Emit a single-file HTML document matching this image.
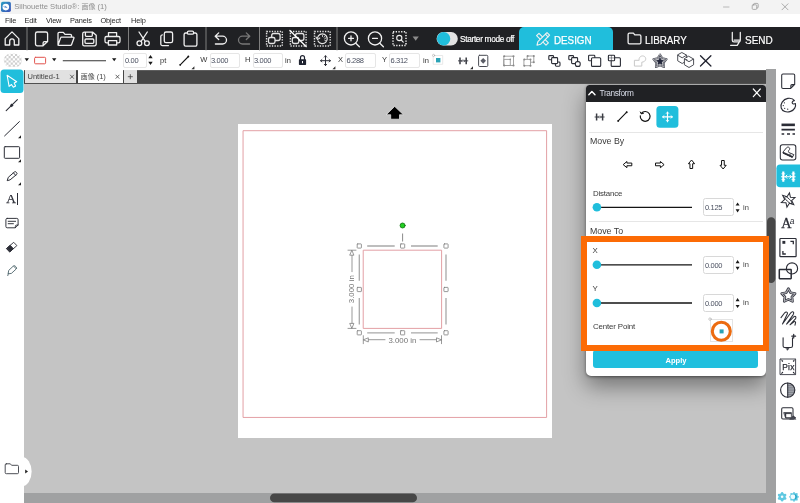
<!DOCTYPE html>
<html><head><meta charset="utf-8"><title>Silhouette Studio</title>
<style>
*{margin:0;padding:0;box-sizing:border-box}
html,body{width:800px;height:503px;overflow:hidden;background:#c4c4c4}
body{position:relative;will-change:transform;font-family:"Liberation Sans","Noto Sans CJK JP",sans-serif;color:#222}
.a{position:absolute}
.t{position:absolute;white-space:nowrap;line-height:1;font-size:7.5px;color:#333}
.m{font-size:7.400px;letter-spacing:-0.150px;color:#2a2a2a}
#title{left:0;top:0;width:800px;height:14.300px;background:#f3f3f3}
#menu{left:0;top:14px;width:800px;height:13px;background:#fff}
#tb1{left:0;top:27px;width:800px;height:23.600px;background:#202124}
#tb2{left:0;top:50px;width:800px;height:20px;background:#fff}
#tabs{left:24px;top:69.600px;width:742px;height:14.300px;background:linear-gradient(#6a6a6a 0,#464646 1.500px,#464646 13.300px,#777 14.300px)}
#left{left:0;top:69px;width:24px;height:434px;background:#fff}
#right{left:776px;top:69px;width:24px;height:434px;background:#fff}
#vs{left:766px;top:69px;width:10px;height:434px;background:#a0a1a2}
#hs{left:24px;top:493px;width:752px;height:10px;background:#a0a1a2}
#sheet{left:237.800px;top:123.900px;width:314.200px;height:314.100px;background:#fff}
.inp{position:absolute;border:1px solid #e6e6e6;border-radius:2px;background:#fff}
#ov{position:absolute;left:0;top:0;width:800px;height:503px;overflow:visible}
</style></head><body>
<div class="a" id="title"></div>
<div class="a" id="menu"></div>
<div class="a" id="tb1"></div>
<div class="a" id="tb2"></div>
<div class="a" id="tabs"></div>
<div class="a" id="sheet"></div>
<div class="a" id="vs"></div>
<div class="a" id="hs"></div>
<div class="a" id="left"></div>
<div class="a" id="right"></div>
<!-- title + menu text -->
<div class="t" id="ttl" style="left:14.200px;top:3.300px;font-size:7.600px;color:#8e8e8e">Silhouette Studio®: <span style="font-size:7px">画像</span> (1)</div>
<div class="t m" style="left:5px;top:17.2px">File</div>
<div class="t m" style="left:24.5px;top:17.2px">Edit</div>
<div class="t m" style="left:46px;top:17.2px">View</div>
<div class="t m" style="left:70px;top:17.2px">Panels</div>
<div class="t m" style="left:100.5px;top:17.2px">Object</div>
<div class="t m" style="left:131px;top:17.2px">Help</div>
<!-- toolbar 1 text -->
<div class="t" id="smo" style="left:460px;top:35.100px;font-size:8.300px;color:#fff;letter-spacing:-0.330px;-webkit-text-stroke:0.180px #fff">Starter mode off</div>
<div class="a" style="left:519px;top:27px;width:93.5px;height:23px;background:#20bedc;border-radius:5px 5px 0 0"></div>
<div class="t" id="dsg" style="left:554.300px;top:34.900px;font-size:11.200px;color:#fff;transform:scaleX(0.876);transform-origin:0 0;-webkit-text-stroke:0.250px #fff">DESIGN</div>
<div class="t" id="lib" style="left:645px;top:34.900px;font-size:11.200px;color:#fff;transform:scaleX(0.876);transform-origin:0 0;-webkit-text-stroke:0.200px #fff">LIBRARY</div>
<div class="t" id="snd" style="left:745px;top:34.900px;font-size:11.200px;color:#fff;transform:scaleX(0.894);transform-origin:0 0;-webkit-text-stroke:0.200px #fff">SEND</div>
<!-- toolbar 2 text/inputs -->
<div class="inp" style="left:122.5px;top:52.5px;width:24px;height:15.5px"></div>
<div class="t q" style="left:125px;top:57px;letter-spacing:-0.350px;color:#4a5060">0.00</div>
<div class="t q" style="left:160px;top:56.5px">pt</div>
<div class="t q" style="left:200.300px;top:56.400px">W</div>
<div class="inp" style="left:209.5px;top:52.5px;width:30.5px;height:15.5px"></div>
<div class="t q" style="left:211px;top:57px;letter-spacing:-0.350px;color:#4a5060">3.000</div>
<div class="t q" style="left:245px;top:56.2px">H</div>
<div class="inp" style="left:252.5px;top:52.5px;width:30.5px;height:15.5px"></div>
<div class="t q" style="left:254px;top:57px;letter-spacing:-0.350px;color:#4a5060">3.000</div>
<div class="t q" style="left:285px;top:56.5px">in</div>
<div class="t q" style="left:338px;top:56.2px">X</div>
<div class="inp" style="left:345px;top:52.5px;width:30.5px;height:15.5px"></div>
<div class="t q" style="left:346.5px;top:57px;letter-spacing:-0.350px;color:#4a5060">6.288</div>
<div class="t q" style="left:382px;top:56.2px">Y</div>
<div class="inp" style="left:389px;top:52.5px;width:30.5px;height:15.5px"></div>
<div class="t q" style="left:390.5px;top:57px;letter-spacing:-0.350px;color:#4a5060">6.312</div>
<div class="t q" style="left:423px;top:56.5px">in</div>
<!-- doc tabs -->
<div class="a" style="left:24.800px;top:70.400px;width:51.500px;height:12.500px;background:#e1e1e1"></div>
<div class="a" style="left:77.700px;top:70.400px;width:45.300px;height:12.700px;background:#fff"></div>
<div class="a" style="left:123.800px;top:70.400px;width:13px;height:12.500px;background:#e1e1e1"></div>
<div class="t" style="left:27.500px;top:73.100px;font-size:7.500px;color:#444">Untitled-1</div>
<div class="t" style="left:80.800px;top:73.100px;font-size:7.500px;color:#444"><span style="font-size:6.900px">画像</span> (1)</div>
<div class="t" style="left:6.200px;top:192px;font-family:'Liberation Serif',serif;font-size:13.400px;color:#2b2d36;-webkit-text-stroke:0.250px #2b2d36">A</div>
<div class="a" style="left:16.700px;top:193.400px;width:1px;height:11.600px;background:#2b2d36"></div>
<!-- transform panel -->
<div class="a" style="left:24px;top:83.700px;width:742px;height:409.300px;overflow:hidden"><div class="a" id="panel" style="left:562px;top:1.300px;width:179.600px;height:291.500px;background:#fff;border-radius:3.500px 3.500px 5px 5px;box-shadow:0 10px 22px rgba(0,0,0,0.42), 0 1px 3px rgba(0,0,0,0.45)"></div></div>
<div class="a" style="left:586px;top:85px;width:179.600px;height:17px;background:#202124;border-radius:3.500px 3.500px 0 0"></div>
<div class="t" id="trf" style="left:599.600px;top:88.800px;font-size:8.300px;color:#d9dde8;letter-spacing:-0.400px">Transform</div>
<div class="a" style="left:589px;top:131.600px;width:174px;height:1px;background:#e6e6e6"></div>
<div class="a" style="left:589px;top:220.600px;width:174px;height:1px;background:#e6e6e6"></div>
<div class="t p" id="mby" style="left:590px;top:137.200px;font-size:8.800px;color:#3a3a3a">Move By</div>
<div class="t p" id="dst" style="left:593px;top:190.300px;font-size:7.900px;color:#3a3a3a;letter-spacing:-0.200px">Distance</div>
<div class="t p" id="mto" style="left:590px;top:226.700px;font-size:8.800px;color:#3a3a3a">Move To</div>
<div class="t p" style="left:592.400px;top:247px;font-size:7.900px;color:#3a3a3a">X</div>
<div class="t p" style="left:592.400px;top:285.400px;font-size:7.900px;color:#3a3a3a">Y</div>
<div class="t p" id="cpt" style="left:593px;top:323px;font-size:7.900px;color:#3a3a3a;letter-spacing:-0.150px">Center Point</div>
<div class="inp" style="left:703px;top:198px;width:30.500px;height:18px;border-radius:2.500px;border-color:#d8d8d8"></div>
<div class="inp" style="left:703px;top:255.600px;width:30.500px;height:18px;border-radius:2.500px;border-color:#d8d8d8"></div>
<div class="inp" style="left:703px;top:293.700px;width:30.500px;height:18px;border-radius:2.500px;border-color:#d8d8d8"></div>
<div class="t v" style="left:705px;top:204px;color:#4a5060;letter-spacing:-0.350px">0.125</div>
<div class="t v" style="left:705px;top:261.600px;color:#4a5060;letter-spacing:-0.350px">0.000</div>
<div class="t v" style="left:705px;top:299.700px;color:#4a5060;letter-spacing:-0.350px">0.000</div>
<div class="t v" style="left:743px;top:203.500px;color:#444">in</div>
<div class="t v" style="left:743px;top:261px;color:#444">in</div>
<div class="t v" style="left:743px;top:299px;color:#444">in</div>
<div class="a" style="left:593.200px;top:350px;width:164.600px;height:18.400px;background:#20bfde;border-radius:3px"></div>
<div class="t" id="apl" style="left:665.500px;top:356.900px;font-size:7.600px;color:#fff;font-weight:bold">Apply</div>
<div class="a" style="left:709.800px;top:319px;width:23.200px;height:23.200px;border:1px solid #e4e4e4;background:#fff"></div>
<div class="t" style="left:781.300px;top:216px;font-family:'Liberation Serif',serif;font-size:14.200px;color:#2b2d36;-webkit-text-stroke:0.300px #2b2d36">A</div>
<div class="t" style="left:789.700px;top:217.200px;font-family:'Liberation Sans',sans-serif;font-style:italic;font-size:8.500px;color:#2b2d36">a</div>
<div class="t" id="pix" style="left:782.300px;top:362.700px;font-size:8.400px;color:#2b2d36;letter-spacing:0.200px;-webkit-text-stroke:0.250px #2b2d36">Pix</div>
<svg id="ov" viewBox="0 0 800 503" fill="none" stroke-linecap="round" stroke-linejoin="round">
<!-- title bar -->
<g>
<defs><linearGradient id="ig" x1="0" y1="0" x2="1" y2="1"><stop offset="0" stop-color="#2aa0c4"/><stop offset="1" stop-color="#3d4fb8"/></linearGradient></defs>
<rect x="1" y="1.700" width="9.900" height="10.300" rx="1.700" fill="url(#ig)"/>
<circle cx="5.800" cy="7.100" r="3.300" fill="#fff"/>
<path d="M3.800 6.600 C4.800 7.300 5.800 7.700 6.900 7.500 C6.500 6.700 5.900 6.400 5.200 6.300" stroke="#3a78c8" stroke-width="0.700"/>
<path d="M723.5 7 h5.5" stroke="#a8a8a8" stroke-width="0.8"/>
<rect x="752.2" y="4.8" width="4.6" height="4.6" rx="1" stroke="#999" stroke-width="0.8"/>
<path d="M753.6 4.8 v-0.4 a1 1 0 0 1 1-1 h2.6 a1 1 0 0 1 1 1 v2.6 a1 1 0 0 1-1 1 h-0.4" stroke="#999" stroke-width="0.8"/>
<path d="M782 3.8 l6 6 M788 3.8 l-6 6" stroke="#999" stroke-width="0.8"/>
</g>
<!-- toolbar1 icons -->
<g stroke="#f0f0f0" stroke-width="1.3">
<path d="M5.2 38.6 L12 31.9 L18.8 38.6 V45 H14.3 V41.2 A2.3 2.3 0 0 0 9.7 41.2 V45 H5.2 Z"/>
<path d="M27 27.5 V50 M128.5 27.5 V50 M206 27.5 V50 M259.5 27.5 V50 M337 27.5 V50" stroke="#8a8a8a" stroke-width="0.9"/>
<!-- new page -->
<path d="M37.3 32 H45.8 A1.8 1.8 0 0 1 47.6 33.8 V41.5 L43 45.8 H37.3 A1.8 1.8 0 0 1 35.5 44 V33.8 A1.8 1.8 0 0 1 37.3 32 Z M47.4 41.6 H44.6 A1.5 1.5 0 0 0 43.1 43.1 V45.6"/>
<!-- open folder -->
<path d="M58 44.5 V33.6 A1.2 1.2 0 0 1 59.2 32.4 H63.3 L65 34.4 H70.3 A1.2 1.2 0 0 1 71.5 35.6 V37.2 M58 45.2 L60.6 37.9 A1 1 0 0 1 61.5 37.2 H73.2 A0.7 0.7 0 0 1 73.9 38.2 L71.6 44.5 A1.2 1.2 0 0 1 70.5 45.3 H58.6 A0.6 0.6 0 0 1 58 44.6"/>
<!-- save -->
<path d="M84.300 32.200 H92.800 L96.200 35.300 V44.200 A1.600 1.600 0 0 1 94.600 45.800 H84.300 A1.600 1.600 0 0 1 82.700 44.200 V33.800 A1.600 1.600 0 0 1 84.300 32.200 Z M85.400 32.400 V35.600 A0.800 0.800 0 0 0 86.200 36.400 H91.500 A0.800 0.800 0 0 0 92.300 35.600 V32.400"/>
<rect x="85" y="39" width="8.800" height="4.300" rx="1"/>
<!-- print -->
<path d="M108.5 36.5 V32.6 H116.6 V36.5 M108.3 42.8 H106.6 A1.6 1.6 0 0 1 105 41.2 V38.1 A1.6 1.6 0 0 1 106.6 36.5 H118.4 A1.6 1.6 0 0 1 120 38.1 V41.2 A1.6 1.6 0 0 1 118.4 42.8 H116.8 M108.4 40.6 H116.7 V45 H108.4 Z"/>
<!-- scissors -->
<path d="M139 32 L145.2 41.3 M147.3 32 L141.1 41.3"/>
<circle cx="139.4" cy="43.3" r="2.4"/><circle cx="146.9" cy="43.3" r="2.4"/>
<!-- copy -->
<rect x="164.3" y="32" width="8.3" height="10.6" rx="1.7"/>
<path d="M168.5 45.6 H162.5 A1.7 1.7 0 0 1 160.8 43.9 V36.4 A1.7 1.7 0 0 1 162.3 34.8"/>
<!-- paste -->
<path d="M187.3 33 H185.7 A1.6 1.6 0 0 0 184.1 34.6 V44.6 A1.6 1.6 0 0 0 185.7 46.2 H195.3 A1.6 1.6 0 0 0 196.9 44.6 V34.6 A1.6 1.6 0 0 0 195.3 33 H193.7"/>
<rect x="187.4" y="31.2" width="6.2" height="3" rx="1.3"/>
<!-- undo -->
<path d="M218.7 32.9 L215.2 36.2 L218.7 39.5 M215.6 36.2 H222.6 A3.9 3.9 0 0 1 222.6 44 H215.4"/>
<g stroke="#777"><path d="M246.3 32.9 L249.8 36.2 L246.3 39.5 M249.4 36.2 H242.4 A3.9 3.9 0 0 0 242.4 44 H249.6"/></g>
<!-- group icons -->
<g stroke-width="1.450" stroke="#e4e4e4">
<rect x="266.600" y="31.400" width="15.700" height="14.500" stroke-dasharray="1.300 1.320" stroke-linecap="butt" stroke-linejoin="miter"/>
<rect x="271.700" y="33.500" width="8.400" height="7" rx="2" stroke-width="1.300"/>
<rect x="268.500" y="37.500" width="6.500" height="6" rx="1.800" stroke-width="1.300" fill="#202124"/>
<rect x="290.400" y="31.400" width="15.700" height="14.500" stroke-dasharray="1.300 1.320" stroke-linecap="butt" stroke-linejoin="miter"/>
<rect x="295.500" y="33.500" width="8.400" height="7" rx="2" stroke-width="1.300"/>
<rect x="292.300" y="37.500" width="6.500" height="6" rx="1.800" stroke-width="1.300" fill="#202124"/>
<path d="M289.900 30.500 L306.300 46.700" stroke-width="1.250" stroke="#fff"/>
<rect x="314.500" y="31.400" width="15.700" height="14.500" stroke-dasharray="1.300 1.320" stroke-linecap="butt" stroke-linejoin="miter"/>
<path d="M318 41 A4.900 4.900 0 1 0 317.500 38" stroke-width="1.250"/>
<path d="M316 37 L317.500 39.600 L319.800 38" stroke-width="1.100"/>
<path d="M322.500 35.400 V36.600 M324.800 36.200 L324.100 37.200 M326 38 L324.900 38.400 M325.600 40.600 L324.600 40.100" stroke-width="0.800"/>
</g>
<!-- zoom in / out -->
<circle cx="351" cy="38.4" r="6.6"/><path d="M355.8 43.2 L359.4 46.8 M348.6 38.4 H353.4 M351 36 V40.8"/>
<circle cx="375" cy="38.4" r="6.6"/><path d="M379.8 43.2 L383.4 46.8 M372.6 38.4 H377.4"/>
<g stroke-width="1.5"><rect x="393" y="31.8" width="13" height="13.6" stroke-dasharray="1.3 1.4" stroke-linecap="butt"/></g>
<circle cx="399.3" cy="38" r="2.6" stroke-width="1.1"/><path d="M401.2 40 L403.3 42.2" stroke-width="1.1"/>
<path d="M412.6 36.4 H418.8 L415.7 40.8 Z" fill="#8c8c8c" stroke="none"/>
<!-- toggle -->
<rect x="436.6" y="32" width="21.2" height="13.4" rx="6.7" fill="#e3e3e3" stroke="none"/>
<circle cx="443.6" cy="38.7" r="6.7" fill="#20bedc" stroke="none"/>
<!-- design icon -->
<g stroke-width="1.15">
<path d="M538.2 33.3 L547.6 42.8 L545.2 45.2 L535.8 35.7 Z" transform="translate(0.8,0)"/>
<path d="M546.2 32.6 L548.8 35.2 L539.7 44.3 L536.2 45.2 L537.1 41.7 Z" fill="#20bedc" transform="translate(0.8,0)"/>
<path d="M544.6 34.2 L547.2 36.8" transform="translate(0.8,0)"/>
</g>
<!-- library icon -->
<path d="M629.4 33.2 H633.4 L634.8 34.9 H639.6 A1.3 1.3 0 0 1 640.9 36.2 V42.6 A1.3 1.3 0 0 1 639.6 43.9 H629.4 A1.3 1.3 0 0 1 628.1 42.6 V34.5 A1.3 1.3 0 0 1 629.4 33.2 Z" stroke-width="1.3"/>
<!-- send icon -->
<path d="M732.300 32.400 V40.300 A1.600 1.600 0 0 0 733.900 41.900 H738.700 A1.600 1.600 0 0 0 740.300 40.300 V32.400 M734 40 H740.200 M739.200 42.200 L737.200 45.300 H730.600" stroke-width="1.250"/>
</g>
<!-- toolbar2 icons -->
<defs><clipPath id="ckc"><rect x="3.800" y="53.700" width="18.100" height="13.400" rx="6.500"/></clipPath></defs>
<g stroke="#2b2d36" stroke-width="1.1">
<g clip-path="url(#ckc)" stroke="none"><rect x="3" y="53" width="20" height="15" fill="#fff"/><path d="M2.10 53.95h2.15v2.15h-2.15zM2.10 58.25h2.15v2.15h-2.15zM2.10 62.55h2.15v2.15h-2.15zM2.10 66.85h2.15v2.15h-2.15zM4.25 51.80h2.15v2.15h-2.15zM4.25 56.10h2.15v2.15h-2.15zM4.25 60.40h2.15v2.15h-2.15zM4.25 64.70h2.15v2.15h-2.15zM6.40 53.95h2.15v2.15h-2.15zM6.40 58.25h2.15v2.15h-2.15zM6.40 62.55h2.15v2.15h-2.15zM6.40 66.85h2.15v2.15h-2.15zM8.55 51.80h2.15v2.15h-2.15zM8.55 56.10h2.15v2.15h-2.15zM8.55 60.40h2.15v2.15h-2.15zM8.55 64.70h2.15v2.15h-2.15zM10.70 53.95h2.15v2.15h-2.15zM10.70 58.25h2.15v2.15h-2.15zM10.70 62.55h2.15v2.15h-2.15zM10.70 66.85h2.15v2.15h-2.15zM12.85 51.80h2.15v2.15h-2.15zM12.85 56.10h2.15v2.15h-2.15zM12.85 60.40h2.15v2.15h-2.15zM12.85 64.70h2.15v2.15h-2.15zM15.00 53.95h2.15v2.15h-2.15zM15.00 58.25h2.15v2.15h-2.15zM15.00 62.55h2.15v2.15h-2.15zM15.00 66.85h2.15v2.15h-2.15zM17.15 51.80h2.15v2.15h-2.15zM17.15 56.10h2.15v2.15h-2.15zM17.15 60.40h2.15v2.15h-2.15zM17.15 64.70h2.15v2.15h-2.15zM19.30 53.95h2.15v2.15h-2.15zM19.30 58.25h2.15v2.15h-2.15zM19.30 62.55h2.15v2.15h-2.15zM19.30 66.85h2.15v2.15h-2.15zM21.45 51.80h2.15v2.15h-2.15zM21.45 56.10h2.15v2.15h-2.15zM21.45 60.40h2.15v2.15h-2.15zM21.45 64.70h2.15v2.15h-2.15z" fill="#cfcfcf"/></g>
<path d="M24.600 58.200 H29 L26.800 61.300 Z M52 58.200 H56.400 L54.200 61.300 Z M112 58.200 H116.400 L114.200 61.300 Z M148.3 58.3 H152.7 L150.5 55 Z M148.3 61.8 H152.7 L150.5 65.1 Z" fill="#1a1a1a" stroke="none"/>
<rect x="34.6" y="57.3" width="11" height="6.5" rx="1" stroke="#e2534d" stroke-width="1"/>
<path d="M62.8 60.8 H106" stroke="#333" stroke-width="1.1" stroke-linecap="butt"/>
<!-- line style icon -->
<path d="M180.2 64.8 L188.4 56.5" stroke="#111" stroke-width="1.1"/>
<circle cx="180.2" cy="64.8" r="0.9" fill="#111" stroke="none"/><circle cx="188.4" cy="56.5" r="0.9" fill="#111" stroke="none"/>
<path d="M194.4 66.3 V69.3 H191.4 Z M335.4 66.3 V69.3 H332.4 Z M473 66.3 V69.3 H470 Z" fill="#333" stroke="none"/>
<!-- lock -->
<rect x="298.9" y="59.3" width="7.2" height="5.6" rx="0.6" fill="#1f2330" stroke="none"/>
<path d="M300.5 59.5 V57.6 A2 2 0 0 1 304.500 57.6 V59.5" stroke="#1f2330" stroke-width="1.2"/>
<rect x="302" y="61" width="1" height="2.2" fill="#fff" stroke="none"/>
<!-- move cross -->
<path d="M320.6 60.7 H330.4 M325.500 55.8 V65.6" stroke-width="1"/>
<path d="M321.900 59.500 L320.600 60.700 L321.900 61.900 M329.100 59.500 L330.400 60.700 L329.100 61.900 M324.300 57.100 L325.500 55.800 L326.700 57.100 M324.300 64.300 L325.500 65.600 L326.700 64.300" stroke-width="0.9"/>
<!-- center point mini -->
<rect x="433.6" y="55.5" width="9.1" height="8.8" stroke="#e2e2e2" stroke-width="0.8"/>
<rect x="436" y="58" width="4.4" height="4.4" fill="#2aa3b6" stroke="none"/>
<circle cx="433.6" cy="55.4" r="1.1" fill="#fff" stroke="#aaa" stroke-width="0.6"/>
<!-- transform icon -->
<g stroke="#3a3c44">
<path d="M460 57.400 V64.300 M466.200 57.400 V64.300" stroke-width="1.5" stroke-linecap="butt"/>
<path d="M458.400 60.850 H467.800" stroke-width="0.9"/>
<path d="M462 59.900 L461.100 60.850 L462 61.800 M464.200 59.900 L465.100 60.850 L464.200 61.800" stroke-width="0.7"/>
</g>
<!-- align to page -->
<rect x="478.600" y="55.300" width="9.200" height="11.200" rx="1" stroke="#484a52" stroke-width="1"/>
<path d="M483.200 57.900 L486 60.800 L483.200 63.700 L480.400 60.800 Z" fill="#5b5d66" stroke="none"/>
<!-- group / ungroup (grey) -->
<g stroke="#9a9a9a" stroke-width="0.900">
<rect x="504.200" y="56.200" width="9.300" height="9.300"/>
<rect x="504.200" y="59.400" width="6.100" height="6.100"/>
<g fill="#8a8a8a" stroke="none"><circle cx="504.200" cy="56.200" r="1.050"/><circle cx="513.500" cy="56.200" r="1.050"/><circle cx="504.200" cy="65.500" r="1.050"/><circle cx="513.500" cy="65.500" r="1.050"/><circle cx="510.300" cy="59.400" r="0.800"/></g>
<rect x="527.600" y="56" width="6.200" height="6.200"/>
<rect x="524.300" y="59.400" width="6.200" height="6.300" fill="#fff"/>
<g fill="#8a8a8a" stroke="none"><circle cx="527.600" cy="56" r="1"/><circle cx="533.800" cy="56" r="1"/><circle cx="533.800" cy="62.200" r="1"/><circle cx="524.300" cy="59.400" r="1"/><circle cx="530.500" cy="59.400" r="1"/><circle cx="524.300" cy="65.700" r="1"/><circle cx="530.500" cy="65.700" r="1"/></g>
</g>
<!-- order icons -->
<g stroke="#2b2d36" stroke-width="1.1" fill="#fff">
<rect x="548.800" y="55.600" width="4.800" height="4.200" rx="0.900"/>
<rect x="555.400" y="62" width="4.600" height="4.200" rx="0.900"/>
<rect x="551.600" y="57.600" width="6" height="6" rx="0.900"/>
<rect x="568.800" y="55.600" width="4.800" height="4.200" rx="0.900"/>
<rect x="571.600" y="57.600" width="6" height="6" rx="0.900"/>
<rect x="575.400" y="61.600" width="4.800" height="4.800" rx="2"/>
<rect x="588.600" y="55.300" width="6.200" height="5.400" rx="0.800"/>
<rect x="591.500" y="57.700" width="9.200" height="8.700" rx="1"/>
<rect x="611.200" y="57.700" width="9.200" height="8.700" rx="1"/>
<rect x="608.400" y="55.300" width="6.200" height="5.400" rx="0.800"/>
<path d="M611.400 55.500 V60.500 M608.600 57.900 H614.400" stroke-width="0.5"/>
</g>
<!-- weld (light) -->
<path d="M634.400 65.700 V60.300 H639.200 C638.500 57.500 641 55.500 643.300 56 C645.800 56.500 646.600 59.500 644.600 61.200 C643.700 62 642.600 62 641.800 62.200 V65.700 Z" stroke="#c9c9c9" stroke-width="1" fill="#fff"/>
<!-- star -->
<path d="M660.00 54.40 L662.35 58.16 L666.66 59.24 L663.80 62.64 L664.11 67.06 L660.00 65.40 L655.89 67.06 L656.20 62.64 L653.34 59.24 L657.65 58.16 Z" stroke="#474955" stroke-width="1.900" fill="#fff"/>
<path d="M660.00 54.40 L662.35 58.16 L666.66 59.24 L663.80 62.64 L664.11 67.06 L660.00 65.40 L655.89 67.06 L656.20 62.64 L653.34 59.24 L657.65 58.16 Z" stroke="#fff" stroke-width="0.500" fill="none"/>
<path d="M660.00 57.80 L661.12 59.96 L663.52 60.36 L661.81 62.09 L662.17 64.49 L660.00 63.40 L657.83 64.49 L658.19 62.09 L656.48 60.36 L658.88 59.96 Z" fill="#23263a" stroke="#23263a" stroke-width="0.700"/>
<!-- cubes -->
<g stroke="#3a3c44" stroke-width="0.9" fill="#fff">
<path d="M682.200 52.700 L686.700 55.200 V60.800 L682.200 63.500 L677.700 60.800 V55.200 Z M677.900 55.300 L682.200 57.800 L686.500 55.300"/>
<path d="M689 56.400 L693.600 59 V64.800 L689 67.500 L684.400 64.800 V59 Z M684.600 59.100 L689 61.700 L693.400 59.100"/>
</g>
<path d="M700.500 55.700 L710.900 66 M710.900 55.700 L700.500 66" stroke="#20222e" stroke-width="1.3"/>
</g>
<!-- doc tabs x/+ -->
<g stroke="#444" stroke-width="0.800">
<path d="M70.400 75.100 L73.600 78.400 M73.600 75.100 L70.400 78.400 M115.900 75.100 L119.100 78.400 M119.100 75.100 L115.900 78.400 M128.200 76.700 H132.400 M130.300 74.600 V78.800"/>
</g>
<!-- left toolbar -->
<rect x="0.5" y="69.500" width="23" height="23.500" rx="3.500" fill="#20bedc"/>
<path d="M7.100 75.200 L16.700 81.700 L14.200 83 L15.600 86 L13.300 87.300 L11.500 84.500 L9.100 86.400 Z" stroke="#fff" stroke-width="1.050"/>
<g stroke="#2b2d36" stroke-width="1.1">
<path d="M6.200 110.600 L17.400 99.600"/>
<rect x="10.400" y="104" width="2.600" height="2.600" fill="#2b2d36" stroke="none" transform="rotate(45 11.700 105.300)"/>
<path d="M4.600 135.900 L19.400 121.600" stroke-width="1"/>
<rect x="4.300" y="146.700" width="15.300" height="11.600" rx="0.800" stroke-width="1"/>
<path d="M21 135.300 V138.300 H18 Z M21 159.300 V162.300 H18 Z M21 182.300 V185.300 H18 Z" fill="#222" stroke="none"/>
<!-- pencil -->
<path d="M7.300 180.300 L8.300 177.300 L14.400 172 A1.200 1.200 0 0 1 16.100 172.100 L16.700 172.800 A1.200 1.200 0 0 1 16.600 174.500 L10.400 179.600 Z M13.500 172.900 L15.600 175.300" stroke-width="1"/>
<!-- note -->
<path d="M7.200 218.400 H16.800 A1.300 1.300 0 0 1 18.100 219.700 V225 L15.300 227.800 H7.200 A1.300 1.300 0 0 1 5.900 226.500 V219.700 A1.300 1.300 0 0 1 7.200 218.400 Z M18 225.100 H16.600 A1.200 1.200 0 0 0 15.400 226.300 V227.600 M8.200 221.300 H15.600 M8.200 223.700 H13.400" stroke-width="0.950"/>
<!-- eraser -->
<path d="M6.800 248.300 L13.700 242.300 L16.900 245.600 L10 251.700 Z" stroke-width="0.900" fill="#fff"/>
<path d="M6.800 248.300 L10.200 245.300 L13.400 248.700 L10 251.700 Z" fill="#2b2d36" stroke-width="0.900"/>
<!-- knife -->
<path d="M8.200 273.300 L8.700 270.400 L13.400 266 A1.300 1.300 0 0 1 15.200 266.100 L16.300 267.200 A1.300 1.300 0 0 1 16.200 269 L11.400 273.400 L9.300 273.700 Z M8.400 273.300 L7.800 275.600 M13.700 266.200 L16 268.600" stroke="#4d646b" stroke-width="0.900"/>
</g>
<!-- bottom-left folder bump -->
<ellipse cx="22" cy="471.600" rx="9.600" ry="14.600" fill="#fff"/>
<rect x="0" y="456" width="24" height="32" fill="#fff"/>
<path d="M6.300 463.800 H10.300 L11.600 465.300 H17.400 A1.100 1.100 0 0 1 18.500 466.400 V472.600 A1.100 1.100 0 0 1 17.400 473.700 H6.300 A1.100 1.100 0 0 1 5.200 472.600 V464.900 A1.100 1.100 0 0 1 6.300 463.800 Z" stroke="#3a3c44" stroke-width="0.900"/>
<path d="M25.200 469.400 L28 471.500 L25.200 473.600 Z" fill="#222"/>
<!-- h scroll thumb -->
<rect x="270" y="493.500" width="147" height="8.800" rx="4.400" fill="#474747"/>
<!-- v scroll thumb -->
<rect x="767" y="217.300" width="8.400" height="65.700" rx="4.200" fill="#474747"/>
<!-- canvas -->
<path d="M394.800 106.600 L403.400 114.700 H399.500 V119.200 H390.700 V114.700 H386.500 Z" fill="#000" stroke="#e8e8e8" stroke-width="0.700" stroke-linejoin="miter"/>
<rect x="243.450" y="130.700" width="303.150" height="286.750" stroke="#e29ba0" stroke-width="0.950"/>
<rect x="363.600" y="250.200" width="78" height="78.200" stroke="#e29ba0" stroke-width="0.950"/>
<g stroke="#a9a9a9" stroke-width="1.300" stroke-linecap="butt">
<path d="M367.200 246 H394.700 M411 246 H437.700 M367.200 332.800 H394.700 M411 332.800 H437.700 M359.300 254.400 V280.800 M359.300 298 V324.400 M446 254.400 V280.800 M446 298 V324.400"/>
<path d="M402.600 233.500 V241.500" stroke="#8a8a8a" stroke-width="1"/>
</g>
<g stroke="#7d7d7d" stroke-width="0.800" fill="#fff">
<rect x="357.200" y="243.900" width="4.200" height="4.200" rx="0.500"/><rect x="400.500" y="243.900" width="4.200" height="4.200" rx="0.500"/><rect x="443.900" y="243.900" width="4.200" height="4.200" rx="0.500"/>
<rect x="357.200" y="287.400" width="4.200" height="4.200" rx="0.500"/><rect x="443.900" y="287.400" width="4.200" height="4.200" rx="0.500"/>
<rect x="357.200" y="330.700" width="4.200" height="4.200" rx="0.500"/><rect x="400.500" y="330.700" width="4.200" height="4.200" rx="0.500"/><rect x="443.900" y="330.700" width="4.200" height="4.200" rx="0.500"/>
</g>
<circle cx="402.600" cy="225.500" r="2.500" fill="#22d022" stroke="#1a7a1a" stroke-width="0.900"/>
<!-- dimension lines -->
<g stroke="#6e6e6e" stroke-width="0.700" fill="#fff">
<path d="M348 250.200 H356 M348 328.400 H356 M352 255 V271.700 M352 307 V323.600"/>
<path d="M352 250.600 L353.900 255.200 H350.100 Z M352 328 L353.900 323.400 H350.100 Z"/>
<path d="M363.300 335.700 V343.700 M441.500 335.700 V343.700 M368.400 339.700 H385 M420 339.700 H436.400"/>
<path d="M363.700 339.700 L368.300 337.800 V341.600 Z M441.100 339.700 L436.500 337.800 V341.600 Z"/>
</g>
<text x="402.400" y="342.600" font-family="Liberation Sans, sans-serif" font-size="7.400" fill="#757575" text-anchor="middle" textLength="28" lengthAdjust="spacingAndGlyphs">3.000 in</text>
<text transform="translate(354.400 289.200) rotate(-90)" font-family="Liberation Sans, sans-serif" font-size="7.400" fill="#757575" text-anchor="middle" textLength="28" lengthAdjust="spacingAndGlyphs">3.000 in</text>
<!-- panel icons -->
<path d="M588.800 94.700 L591.900 91.400 L595 94.700" stroke="#fff" stroke-width="1.400"/>
<path d="M753.300 89 L760.300 96.600 M760.300 89 L753.300 96.600" stroke="#fff" stroke-width="1.200"/>
<g stroke="#3a3c44">
<path d="M596.600 113.600 V120.400 M602.600 113.600 V120.400" stroke-width="1.500" stroke-linecap="butt"/>
<path d="M595 117 H604.200" stroke-width="0.900"/>
<path d="M598.600 116.050 L597.700 117 L598.600 117.950 M600.600 116.050 L601.500 117 L600.600 117.950" stroke-width="0.700"/>
</g>
<path d="M618.200 120.900 L626.700 112.200" stroke="#111" stroke-width="1.150"/>
<circle cx="618.200" cy="120.900" r="0.950" fill="#111"/><circle cx="626.700" cy="112.200" r="0.950" fill="#111"/>
<path d="M641.300 113.400 A4.900 4.900 0 1 1 640.300 115.800" stroke="#111" stroke-width="1.200"/>
<path d="M640.300 112 L641.400 113.900 L643.500 113.300" stroke="#111" stroke-width="1"/>
<rect x="656.400" y="105.900" width="22" height="21.900" rx="3.500" fill="#20bedc"/>
<g stroke="#fff"><path d="M662.700 116.900 H672.300 M667.500 112.100 V121.700" stroke-width="1.150"/>
<path d="M664 115.700 L662.700 116.900 L664 118.100 M671 115.700 L672.300 116.900 L671 118.100 M666.300 113.400 L667.500 112.100 L668.700 113.400 M666.300 120.400 L667.500 121.700 L668.700 120.400" stroke-width="0.900"/></g>
<!-- move by arrows -->
<g stroke="#111" stroke-width="1" fill="#fff" stroke-linejoin="miter">
<path d="M623.50 164.40 L626.90 161.50 V163.05 H631.80 V165.75 H626.90 V167.30 Z"/>
<path d="M663.80 164.40 L660.40 161.50 V163.05 H655.50 V165.75 H660.40 V167.30 Z"/>
<path d="M691.30 160.30 L688.40 163.70 H689.95 V168.50 H692.65 V163.70 H694.20 Z"/>
<path d="M722.90 168.70 L720.00 165.30 H721.55 V160.50 H724.25 V165.30 H725.80 Z"/>
</g>
<!-- sliders -->
<g stroke="#141414" stroke-width="1.300" stroke-linecap="butt"><path d="M597 207.350 H692 M597 264.850 H692 M597 303 H692"/></g>
<circle cx="596.900" cy="207.300" r="4.300" fill="#20bedc"/><circle cx="596.900" cy="264.800" r="4.300" fill="#20bedc"/><circle cx="596.900" cy="302.950" r="4.300" fill="#20bedc"/>
<path d="M735.600 205.600 H739.600 L737.600 202.400 Z M735.600 209.200 H739.600 L737.600 212.400 Z M735.600 263.200 H739.600 L737.600 260 Z M735.600 266.800 H739.600 L737.600 270 Z M735.600 301.300 H739.600 L737.600 298.100 Z M735.600 304.900 H739.600 L737.600 308.100 Z" fill="#1a1a1a"/>
<!-- center point -->
<circle cx="710" cy="319.100" r="1.250" fill="#fff" stroke="#aaa" stroke-width="0.600"/>
<rect x="719.600" y="329.400" width="4" height="4" fill="#2aa3b6"/>
<circle cx="721.300" cy="331.300" r="9" stroke="#ec6b10" stroke-width="3.100"/>
<!-- right toolbar -->
<g stroke="#2b2d36" stroke-width="1.050">
<!-- page -->
<path d="M783 74 H793.400 A1.300 1.300 0 0 1 794.700 75.300 V84.500 L790.700 88.500 H783 A1.300 1.300 0 0 1 781.700 87.200 V75.300 A1.300 1.300 0 0 1 783 74 Z M794.600 84.600 H792 A1.200 1.200 0 0 0 790.800 85.800 V88.300"/>
<path d="M794 85.400 L791.600 87.800 V85.400 Z" fill="#2b2d36" stroke="none"/>
<!-- palette -->
<path d="M787.800 98.400 C790.600 98 793.400 99 794.400 100.600 C793 100.800 792 101.700 792.200 102.800 C792.500 104.100 794.200 104.300 795.400 103.600 C796.200 106.600 794.400 110 790.600 111.400 C786.600 112.800 782.400 111.600 781.200 108 C780 104.200 782.800 99.200 787.800 98.400 Z" stroke-width="1.150"/>
<g fill="#2b2d36" stroke="none"><circle cx="784.400" cy="102.800" r="0.650"/><circle cx="783.300" cy="105.600" r="0.650"/><circle cx="784.700" cy="108.300" r="0.650"/><circle cx="787.700" cy="109.200" r="0.650"/></g>
<!-- lines -->
<path d="M781.500 124.850 H794.900" stroke-width="2.600" stroke-linecap="butt"/>
<path d="M781.500 129.650 H794.900" stroke-width="1.800" stroke-linecap="butt"/>
<path d="M781.600 134 H784.200 M787 134 H790 M792.500 134 H795" stroke-width="1.500" stroke-linecap="butt"/>
<!-- trace -->
<rect x="780.300" y="144.800" width="15.500" height="15.200" rx="2.200"/>
<path d="M783.400 151.600 L786.600 147.700 C787.400 146.800 788.900 146.900 789.500 147.900 C790 148.800 789.700 149.700 788.900 150.100 C788.300 150.900 788.300 152 788.900 152.600 L793.800 154.600 L792.300 157.400 L783.400 153.300 Z" stroke-width="0.950"/>
<path d="M783.500 152.700 L792.200 156.800" stroke-width="1.500"/>
<circle cx="790" cy="154.500" r="0.600" fill="#2b2d36" stroke="none"/>
</g>
<!-- selected: transform -->
<path d="M800 164.400 H780.200 A3.800 3.800 0 0 0 776.400 168.200 V183.500 A3.800 3.800 0 0 0 780.200 187.300 H800 Z" fill="#20bedc"/>
<g stroke="#fff">
<path d="M783.300 171.600 V181.800 M793.400 171.600 V181.800" stroke-width="2.100" stroke-linecap="butt"/>
<path d="M781.400 176.700 H795.200" stroke-width="1.100"/>
<path d="M786.900 175.100 L785.300 176.700 L786.900 178.300 M789.800 175.100 L791.400 176.700 L789.800 178.300" stroke-width="1"/>
<path d="M781.800 173.800 H784.800 M781.800 179.600 H784.800 M791.900 173.800 H794.900 M791.900 179.600 H794.900" stroke-width="0.800"/>
</g>
<g stroke="#2b2d36" stroke-width="1.050">
<!-- replicate star -->
<path d="M789.45 192.91 L790.45 197.32 L794.97 197.54 L791.65 200.61 L793.72 204.63 L789.40 203.29 L786.95 207.09 L785.95 202.68 L781.43 202.46 L784.75 199.39 L782.68 195.37 L787.00 196.71 Z" stroke-width="1.050" stroke-linejoin="miter"/>
<ellipse cx="788.400" cy="200.200" rx="4.800" ry="1.400" transform="rotate(44 788.400 200.200)" stroke-width="0.900"/>
<!-- shapes -->
<circle cx="792" cy="268.400" r="5.600" stroke-width="1.150"/>
<rect x="779.300" y="269.500" width="11.900" height="9.200" rx="0.400" stroke-width="1.500" stroke-linejoin="miter"/>
<!-- offset square -->
<rect x="779.900" y="238.500" width="16.200" height="18.100" rx="0.700" stroke-width="1.200"/>
<rect x="782.400" y="240.900" width="2.900" height="2.900" fill="#2b2d36" stroke="none"/>
<path d="M790.400 241.400 H793.300 V244.300 M782.900 251.100 V254 H785.800" stroke-width="1.300" stroke-linecap="butt" stroke-linejoin="miter"/>
<!-- star -->
<path d="M788.40 288.70 L790.57 292.71 L795.06 293.54 L791.92 296.84 L792.51 301.36 L788.40 299.40 L784.29 301.36 L784.88 296.84 L781.74 293.54 L786.23 292.71 Z" stroke-width="2.700" stroke="#3f414b"/>
<path d="M788.40 288.70 L790.57 292.71 L795.06 293.54 L791.92 296.84 L792.51 301.36 L788.40 299.40 L784.29 301.36 L784.88 296.84 L781.74 293.54 L786.23 292.71 Z" stroke-width="0.800" stroke="#d8d8dc" stroke-dasharray="0.900 0.700"/>
<!-- scribble -->
<path d="M781 317.600 L784.700 312.800 Q786.200 311.200 787.300 312.500 Q787.800 313.400 787 314.600 L782.500 324 L790.800 312.800 Q792.500 310.800 793.600 312.300 Q794 313.200 793.200 314.600 L786.600 324.100 L793.600 317 Q795 315.700 795.800 316.900 Q796.200 317.800 795.400 318.800 L790 324.800 L793.600 322 Q795.200 321 795.600 322.400 L795 325.200" stroke-width="1.050"/>
<!-- U plus -->
<path d="M783.100 337.700 V345.900 A1.600 1.600 0 0 0 784.700 347.500 H790.900 A1.600 1.600 0 0 0 792.500 345.900 V337.700" stroke-width="1.100"/>
<path d="M786.100 348.300 H789.100 L787.600 350.200 Z" fill="#2b2d36" stroke-width="0.400"/>
<path d="M793.700 334.300 V338.100 M791.800 336.200 H795.600" stroke-width="1.200"/>
<!-- pix -->
<rect x="780.400" y="359" width="15.200" height="15.600" stroke-width="1" stroke="#4a4c55"/>
<g fill="#2b2d36" stroke="none"><circle cx="782.400" cy="361" r="0.800"/><circle cx="793.600" cy="361" r="0.800"/><circle cx="782.400" cy="372.600" r="0.800"/><circle cx="793.600" cy="372.600" r="0.800"/></g>
<path d="M780.600 359.200 L782.400 361 M795.400 359.200 L793.600 361 M780.600 374.400 L782.400 372.600 M795.400 374.400 L793.600 372.600" stroke-width="0.700"/>
<!-- half circle -->
<path d="M787.700 383 A7.100 7.100 0 0 1 787.700 397.200 Z" fill="#a0a3aa" stroke="none"/>
<path d="M788 385.600 H793.200 M788 387.800 H794.300 M788 390.100 H794.700 M788 392.400 H794.300 M788 394.600 H793.200" stroke="#6a6d76" stroke-width="0.600"/>
<path d="M787.700 383 V397.200" />
<circle cx="787.700" cy="390.100" r="7.100" stroke-width="1.150"/>
<!-- shadow -->
<path d="M793 416.200 V409 A1.200 1.200 0 0 0 791.800 407.800 H782.900 A1.200 1.200 0 0 0 781.700 409 V417.800 A1.200 1.200 0 0 0 782.900 419 H793.400" stroke-width="1.050"/>
<path d="M784 412.600 H791.400 V413.600 H785.900 V417.800 H795.800 L793.300 416 L791.400 417.800 H785.900 Z" fill="#4a4d57" stroke-width="0.700"/>
<path d="M791.600 417.900 L793.300 416.200 L795.900 419.300 H790 Z" fill="#4a4d57" stroke-width="0.500"/>
<rect x="786.100" y="413.600" width="5.300" height="4.100" fill="#fff" stroke-width="0.800"/>
</g>
<!-- bottom right icons -->
<g fill="#5fc8e1" stroke="none">
<circle cx="782.100" cy="496.800" r="3.500"/><circle cx="785.13" cy="498.55" r="1.250"/><circle cx="782.10" cy="500.30" r="1.250"/><circle cx="779.07" cy="498.55" r="1.250"/><circle cx="779.07" cy="495.05" r="1.250"/><circle cx="782.10" cy="493.30" r="1.250"/><circle cx="785.13" cy="495.05" r="1.250"/>
<circle cx="782.100" cy="496.800" r="1.300" fill="#f4fcfe"/>
<circle cx="794" cy="496.800" r="3.900"/><circle cx="798.00" cy="496.80" r="0.900"/><circle cx="796.83" cy="499.63" r="0.900"/><circle cx="794.00" cy="500.80" r="0.900"/><circle cx="791.17" cy="499.63" r="0.900"/><circle cx="790.00" cy="496.80" r="0.900"/><circle cx="791.17" cy="493.97" r="0.900"/><circle cx="794.00" cy="492.80" r="0.900"/><circle cx="796.83" cy="493.97" r="0.900"/>
<circle cx="792.900" cy="496.800" r="2.400" fill="#f0fbfe"/>
<path d="M794.400 493.900 A2.950 2.950 0 0 1 794.400 499.700 A4.800 4.800 0 0 0 794.400 493.900 Z" fill="#1b9fc2"/>
</g>
</svg>
<div class="a" id="hl" style="left:581px;top:235.700px;width:188px;height:115.800px;border:6px solid #fc6b05"></div>
</body></html>
